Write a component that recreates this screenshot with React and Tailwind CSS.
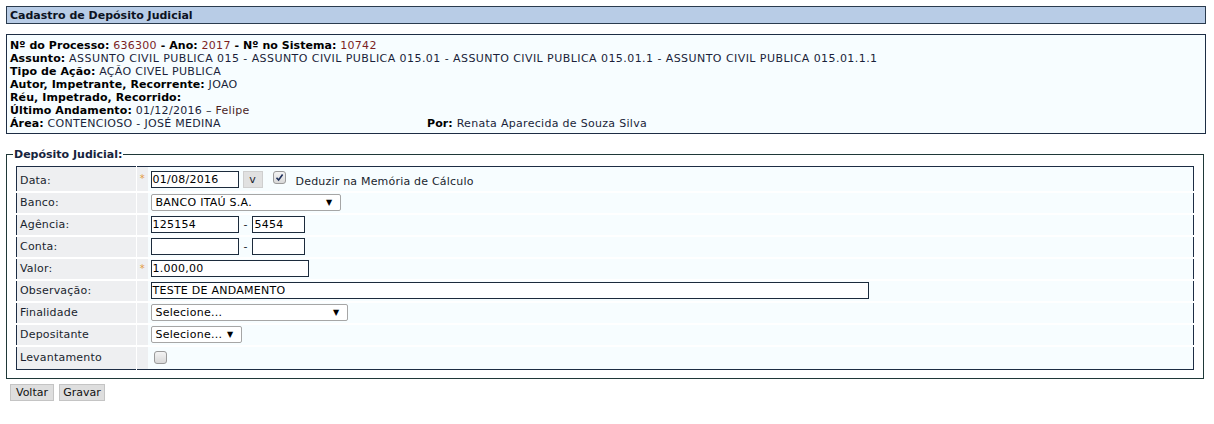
import React from "react";

const font = "font-['DejaVu_Sans','Liberation_Sans',sans-serif]";

function Input({ w, value = "" }) {
  return (
    <span className={`inline-flex items-center h-[17px] ${w} border border-[#1c2b3c] bg-white pl-[1px] text-[11px] leading-none text-black align-middle tracking-[0.25px]`}>
      {value}
    </span>
  );
}

function Select({ w, value }) {
  return (
    <span className={`inline-flex items-center justify-between h-[17px] ${w} border border-[#a6a6a6] rounded-[2px] bg-white pl-[4px] pr-[7px] text-[11px] leading-none text-black align-middle tracking-[0.25px]`}>
      <span>{value}</span>
      <span className="text-[8px] leading-none">▼</span>
    </span>
  );
}

function Check({ checked }) {
  return (
    <span className="inline-flex items-center justify-center w-[13px] h-[13px] rounded-[3px] border border-[#9a9a9a] bg-gradient-to-b from-[#f4f4f4] to-[#d8d8d8] align-middle">
      {checked && (
        <svg width="9" height="9" viewBox="0 0 9 9">
          <path d="M1.5 4.8 L3.6 7 L7.6 1.6" stroke="#1d2f5a" strokeWidth="1.6" fill="none" />
        </svg>
      )}
    </span>
  );
}

function Row({ label, req, first, last, children }) {
  const b = last
    ? "h-[24px]"
    : first
    ? "h-[25px] border-b-2 border-white"
    : "h-[22px] border-b-2 border-white";
  return (
    <tr>
      <td className={`w-[120px] bg-[#eeeff1] pl-[3px] align-middle tracking-[0.2px] ${b} ${first ? "pt-[3px]" : ""} border-r border-r-white`}>{label}</td>
      <td className={`w-[11px] bg-[#eeeff1] ${b} text-center align-top`}>
        {req && <span className={`text-[#e39a3c] text-[10px] leading-none relative ${first ? "top-[5px]" : "top-[3px]"}`}>*</span>}
      </td>
      <td className={`bg-[#f7fdff] pl-[3px] align-middle ${b} ${first ? "pt-[1px]" : ""}`}>
        <div className="flex items-center">{children}</div>
      </td>
    </tr>
  );
}

export default function App() {
  return (
    <div className={`${font} text-[11px] leading-[13px] text-[#111] bg-white min-h-[424px] p-[6px] pr-[8px]`}>
      <div className="h-[18px] border border-[#2a3b4e] bg-[#b8cce6] pl-[3px] flex items-center font-bold text-[#0c1222]">
        Cadastro de Depósito Judicial
      </div>

      <div className="mt-[10px] border border-[#1d2d44] bg-[#f7fdff] pl-[3px] pt-[4px] pb-[3px] text-[#1a1f3a] tracking-[0.3px]">
        <div>
          <b className="text-black tracking-[0.05px]">Nº do Processo:</b> <span className="text-[#7c1f1f]">636300</span>{" "}
          <b className="text-black tracking-[0.05px]">- Ano:</b> <span className="text-[#7c1f1f]">2017</span>{" "}
          <b className="text-black tracking-[0.05px]">- Nº no Sistema:</b> <span className="text-[#7c1f1f]">10742</span>
        </div>
        <div>
          <b className="text-black tracking-[0.1px]">Assunto:</b>{" "}
          <span className="tracking-[0.44px]">ASSUNTO CIVIL PUBLICA 015 - ASSUNTO CIVIL PUBLICA 015.01 - ASSUNTO CIVIL PUBLICA 015.01.1 - ASSUNTO CIVIL PUBLICA 015.01.1.1</span>
        </div>
        <div>
          <b className="text-black tracking-[0.1px]">Tipo de Ação:</b> AÇÃO CIVEL PUBLICA
        </div>
        <div>
          <b className="text-black tracking-[0.1px]">Autor, Impetrante, Recorrente:</b> JOAO
        </div>
        <div>
          <b className="text-black tracking-[0.1px]">Réu, Impetrado, Recorrido:</b>
        </div>
        <div>
          <b className="text-black tracking-[0.1px]">Último Andamento:</b> 01/12/2016 – <span className="text-[#4a1f1f]">Felipe</span>
        </div>
        <div className="flex">
          <span className="w-[417px]">
            <b className="text-black tracking-[0.1px]">Área:</b> CONTENCIOSO - JOSÉ MEDINA
          </span>
          <span>
            <b className="text-black tracking-[0.1px]">Por:</b> Renata Aparecida de Souza Silva
          </span>
        </div>
      </div>

      <fieldset className="mt-[14px] border border-[#1f3838] px-[9px] pt-[5px] pb-[8px] w-[1198px]">
        <legend className="ml-[-3px] px-[1px] font-bold text-[#16233d]">Depósito Judicial:</legend>
        <table className="w-full border border-[#1d2d44] border-collapse bg-[#f7fdff] text-[#1a1f2e]">
          <tbody>
            <Row label="Data:" req first>
              <Input w="w-[88px]" value="01/08/2016" />
              <span className="ml-[4px] inline-flex items-center justify-center w-[20px] h-[17px] bg-[#e1e1e1] border border-[#cfcfcf] text-[11px]">v</span>
              <span className="ml-[10px] relative -top-[2px]"><Check checked /></span>
              <span className="ml-[10px] relative top-[2px] tracking-[0.2px]">Deduzir na Memória de Cálculo</span>
            </Row>
            <Row label="Banco:">
              <Select w="w-[190px]" value="BANCO ITAÚ S.A." />
            </Row>
            <Row label="Agência:">
              <Input w="w-[88px]" value="125154" />
              <span className="mx-[5px]">-</span>
              <Input w="w-[53px]" value="5454" />
            </Row>
            <Row label="Conta:">
              <Input w="w-[88px]" />
              <span className="mx-[5px]">-</span>
              <Input w="w-[53px]" />
            </Row>
            <Row label="Valor:" req>
              <Input w="w-[158px]" value="1.000,00" />
            </Row>
            <Row label="Observação:">
              <Input w="w-[718px]" value="TESTE DE ANDAMENTO" />
            </Row>
            <Row label="Finalidade">
              <Select w="w-[197px]" value="Selecione..." />
            </Row>
            <Row label="Depositante">
              <Select w="w-[91px]" value="Selecione..." />
            </Row>
            <Row label="Levantamento" last>
              <span className="ml-[3px] flex items-center"><Check /></span>
            </Row>
          </tbody>
        </table>
      </fieldset>

      <div className="mt-[5px] ml-[4px] flex gap-[5px]">
        <button className="h-[17px] w-[44px] bg-[#dedede] border border-[#c4c4c4] text-[11px] leading-none text-[#111]">Voltar</button>
        <button className="h-[17px] w-[46px] bg-[#dedede] border border-[#c4c4c4] text-[11px] leading-none text-[#111]">Gravar</button>
      </div>
    </div>
  );
}
